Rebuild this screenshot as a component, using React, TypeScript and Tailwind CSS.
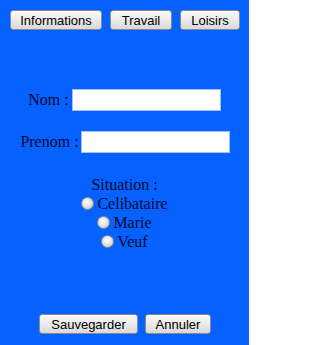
const btn =
  'h-[20px] rounded-[3px] border border-[#8a8a8a] bg-gradient-to-b from-[#fbfbfb] to-[#d9d9d9] px-[6px] text-[13px] leading-none text-black'

function Radio({ label }: { label: string }) {
  return (
    <label className="flex h-[19px] items-center justify-center gap-[3px]">
      <span className="h-[13px] w-[13px] rounded-full border border-[#8f8f8f] bg-[radial-gradient(circle_at_45%_40%,#ffffff_0%,#ececec_35%,#b8b8b8_100%)]" />
      <span>{label}</span>
    </label>
  )
}

export default function App() {
  return (
    <div
      className="flex h-[345px] w-[249px] flex-col bg-[#0561ff] text-[#000830]"
      style={{ fontFamily: '"Liberation Serif", "Times New Roman", serif' }}
    >
      <div
        className="flex gap-[8px] pl-[10px] pt-[10px]"
        style={{ fontFamily: '"Liberation Sans", Arial, sans-serif' }}
      >
        <button className={`${btn} w-[92px]`}>Informations</button>
        <button className={`${btn} w-[62px]`}>Travail</button>
        <button className={`${btn} w-[60px]`}>Loisirs</button>
      </div>

      <div className="mt-[59px] flex h-[22px] items-center justify-center text-[16px] leading-[22px]">
        <span className="mr-[3px]">Nom :</span>
        <input className="h-[22px] w-[149px] border border-[#9fbfff] bg-white" />
      </div>
      <div className="mt-[20px] flex h-[22px] items-center justify-center pl-[1px] text-[16px] leading-[22px]">
        <span className="mr-[2px]">Prenom :</span>
        <input className="h-[22px] w-[149px] border border-[#9fbfff] bg-white" />
      </div>

      <div className="mt-[22px] flex flex-col text-[16px] leading-[19px]">
        <div className="text-center">Situation :</div>
        <Radio label="Celibataire" />
        <Radio label="Marie" />
        <Radio label="Veuf" />
      </div>

      <div
        className="mt-[63px] flex justify-center gap-[7px] pl-[1px]"
        style={{ fontFamily: '"Liberation Sans", Arial, sans-serif' }}
      >
        <button className={`${btn} w-[99px]`}>Sauvegarder</button>
        <button className={`${btn} w-[66px]`}>Annuler</button>
      </div>
    </div>
  )
}
